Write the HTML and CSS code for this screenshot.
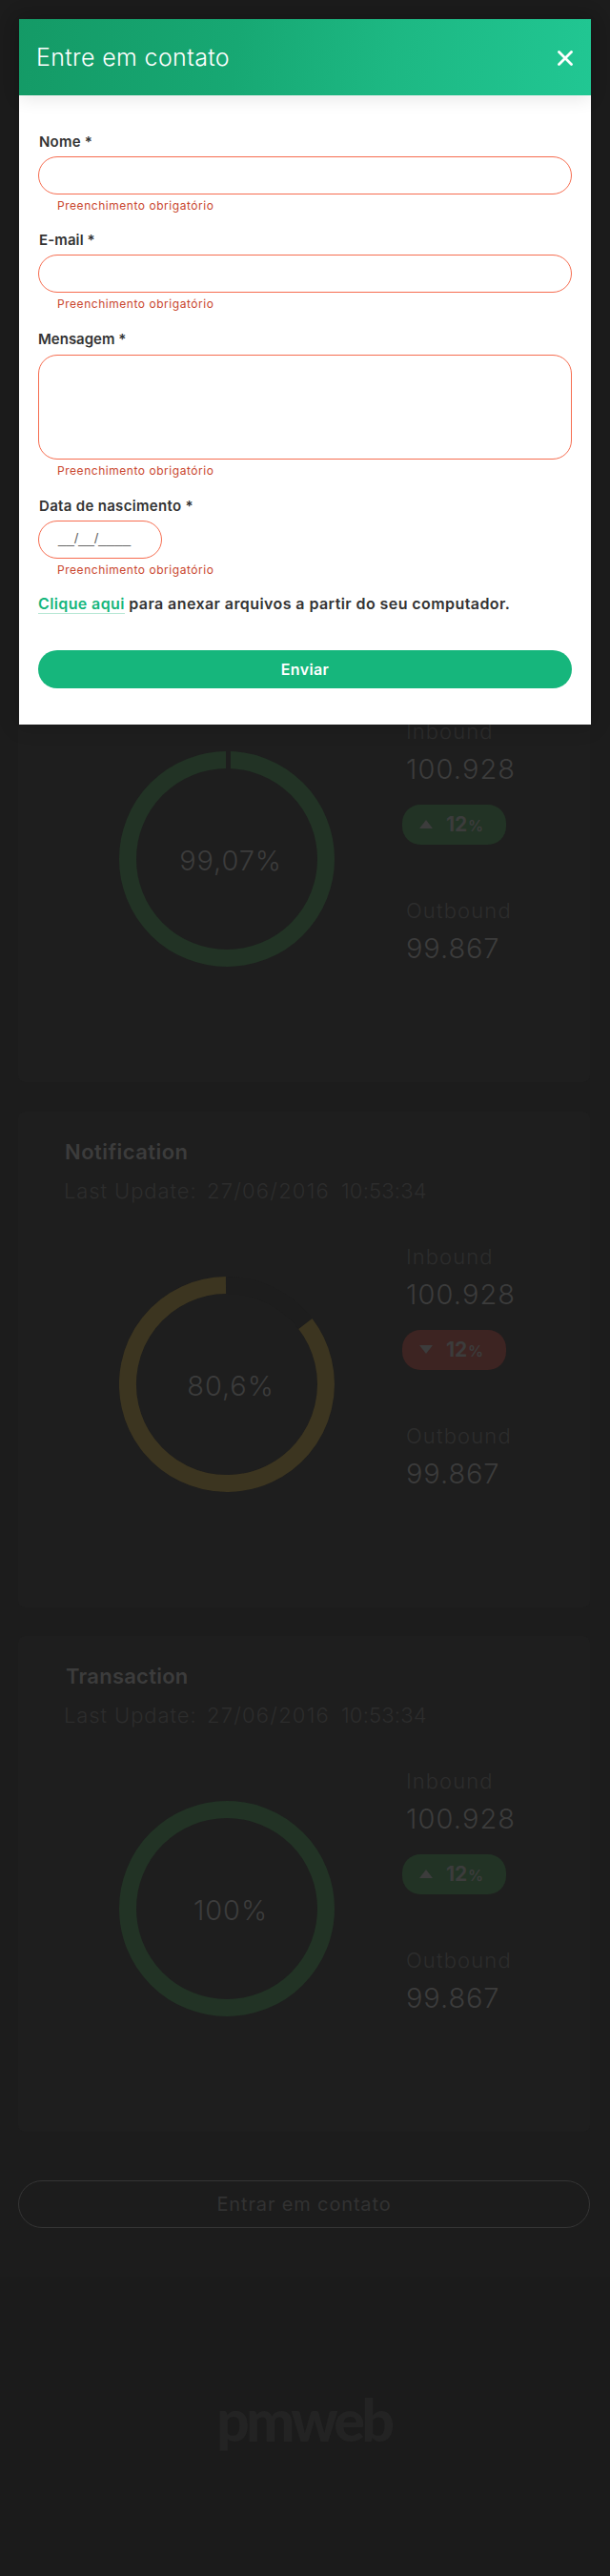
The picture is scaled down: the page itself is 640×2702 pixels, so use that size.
FILE: index.html
```
<!DOCTYPE html>
<html lang="pt-BR">
<head>
<meta charset="utf-8">
<title>Entre em contato</title>
<link rel="stylesheet" href="styles.css">
</head>
<body>
<main class="page">
  <section class="card card-first">
    <div class="card-body">
      <div class="ring">
        <svg class="ring-svg" viewBox="0 0 226 226"><circle class="arc green" cx="113" cy="113" r="104"/><rect class="gap" x="112" y="0" width="5" height="19"/></svg>
        <span class="ring-value">99,07%</span>
      </div>
      <div class="stats">
        <span class="stat-name inbound">Inbound</span>
        <span class="stat-value">100.928</span>
        <span class="badge up"><svg class="arrow" viewBox="0 0 14 9"><path d="M7 0L14 9H0Z"/></svg><b class="num">12</b><b class="pct">%</b></span>
        <span class="stat-name outbound">Outbound</span>
        <span class="stat-value short">99.867</span>
      </div>
    </div>
  </section>

  <section class="card">
    <header class="card-head">
      <h2 class="card-title">Notification</h2>
      <p class="update"><span class="update-label">Last Update:</span><span class="update-date">27/06/2016</span><span class="update-time">10:53:34</span></p>
    </header>
    <div class="card-body">
      <div class="ring">
        <svg class="ring-svg" viewBox="0 0 226 226"><circle class="arc rest" cx="113" cy="113" r="104"/><path class="arc yellow" d="M195.4 49.6A104 104 0 1 1 112 9"/></svg>
        <span class="ring-value">80,6%</span>
      </div>
      <div class="stats">
        <span class="stat-name inbound">Inbound</span>
        <span class="stat-value">100.928</span>
        <span class="badge down"><svg class="arrow" viewBox="0 0 14 9"><path d="M0 0H14L7 9Z"/></svg><b class="num">12</b><b class="pct">%</b></span>
        <span class="stat-name outbound">Outbound</span>
        <span class="stat-value short">99.867</span>
      </div>
    </div>
  </section>

  <section class="card">
    <header class="card-head">
      <h2 class="card-title transaction">Transaction</h2>
      <p class="update"><span class="update-label">Last Update:</span><span class="update-date">27/06/2016</span><span class="update-time">10:53:34</span></p>
    </header>
    <div class="card-body">
      <div class="ring">
        <svg class="ring-svg" viewBox="0 0 226 226"><circle class="arc green" cx="113" cy="113" r="104"/></svg>
        <span class="ring-value">100%</span>
      </div>
      <div class="stats">
        <span class="stat-name inbound">Inbound</span>
        <span class="stat-value">100.928</span>
        <span class="badge up"><svg class="arrow" viewBox="0 0 14 9"><path d="M7 0L14 9H0Z"/></svg><b class="num">12</b><b class="pct">%</b></span>
        <span class="stat-name outbound">Outbound</span>
        <span class="stat-value short">99.867</span>
      </div>
    </div>
  </section>

  <button class="contact" type="button">Entrar em contato</button>

  <footer class="footer">
    <svg class="logo" viewBox="0 -20 240 120" role="img" aria-label="pmweb"><text class="logo-text" x="25" y="58" textLength="187" lengthAdjust="spacing">pmweb</text></svg>
  </footer>
</main>

<div class="modal" role="dialog">
  <header class="modal-head">
    <h1 class="modal-title">Entre em contato</h1>
    <svg class="close" viewBox="0 0 16 16"><path d="M1.5 1.5L14.5 14.5M14.5 1.5L1.5 14.5"/></svg>
  </header>
  <form class="form">
    <label class="label">Nome *</label>
    <div class="field"></div>
    <p class="error">Preenchimento obrigatório</p>
    <label class="label email">E-mail *</label>
    <div class="field"></div>
    <p class="error">Preenchimento obrigatório</p>
    <label class="label message">Mensagem *</label>
    <div class="field area"></div>
    <p class="error">Preenchimento obrigatório</p>
    <label class="label birth">Data de nascimento *</label>
    <div class="field date">__/__/____</div>
    <p class="error">Preenchimento obrigatório</p>
    <p class="attach"><a class="link">Clique aqui</a> para anexar arquivos a partir do seu computador.</p>
    <button class="send" type="button">Enviar</button>
  </form>
</div>
</body>
</html>
```
FILE: styles.css
```
* { box-sizing: border-box; margin: 0; padding: 0; }

body {
  position: relative;
  background: #1c1c1c;
  font-family: Inter, "Liberation Sans", sans-serif;
  color: #3c3c3c;
}

button { font-family: inherit; background: none; border: 0; }

/* Dashboard behind the dialog */
.page {
  display: flex;
  flex-direction: column;
  height: 2702px;
  padding: 615px 21px 0 19px;
}

.card {
  flex: none;
  height: 520px;
  margin-bottom: 30px;
  border-radius: 7px;
  background: #1e1e1e;
}
.card-first { margin-bottom: 31px; padding-top: 98px; }

.card-head { height: 98px; padding: 27px 0 0 49px; }
.card-title { font-size: 22px; line-height: 30px; font-weight: 600; letter-spacing: .45px; }
.card-title.transaction { letter-spacing: .25px; padding-left: 1px; }
.update {
  display: flex;
  margin-top: 11px;
  font-size: 22px;
  line-height: 30px;
  font-weight: 300;
  color: #2d2d2d;
}
.update-label { width: 150px; letter-spacing: .9px; margin-left: -1px; }
.update-date { width: 141px; letter-spacing: 1.2px; }
.update-time { letter-spacing: .2px; }

.card-body { display: flex; }
.ring {
  display: grid;
  width: 226px;
  height: 226px;
  margin: 75px 0 0 106px;
}
.ring-svg, .ring-value { grid-area: 1 / 1; }
.ring-svg { width: 226px; height: 226px; }
.arc { fill: none; stroke-width: 18; }
.green { stroke: #223325; }
.yellow { stroke: #3c3520; }
.rest { stroke: #1d1d1d; }
.gap { fill: #1e1e1e; }
.ring-value {
  place-self: center;
  padding: 3px 0 0 8px;
  font-size: 29px;
  line-height: 36px;
  font-weight: 300;
  letter-spacing: .88px;
}

.stats { display: flex; flex-direction: column; padding: 39px 0 0 75px; }
.stat-name { font-size: 22px; line-height: 30px; font-weight: 300; color: #2d2d2d; }
.inbound { letter-spacing: 1.05px; }
.outbound { margin-top: 54px; letter-spacing: 1.15px; }
.stat-value { margin-top: 7px; font-size: 29px; line-height: 36px; font-weight: 300; letter-spacing: 1.1px; }
.stat-value.short { letter-spacing: .9px; }

.badge {
  display: flex;
  align-items: center;
  width: 109px;
  height: 42px;
  margin: 19px 0 0 -4px;
  padding-left: 18px;
  border-radius: 19px;
}
.badge.up { background: #223325; }
.badge.down { background: #3d2422; }
.arrow { width: 14px; height: 9px; margin-bottom: 1px; fill: #3c3c3c; }
.num { width: 23px; margin-left: 14px; font-size: 21px; line-height: 42px; font-weight: 700; }
.pct { padding-top: 3px; font-size: 16px; line-height: 39px; font-weight: 600; }

.contact {
  flex: none;
  height: 50px;
  margin-top: 21px;
  border: 1px solid #353535;
  border-radius: 25px;
  font-size: 20px;
  letter-spacing: .85px;
  color: #323232;
}

.footer {
  display: flex;
  flex: 1;
  align-items: flex-start;
  justify-content: center;
  margin: 51px -21px 0 -19px;
  padding: 95px 0 0 4px;
  background: #1b1b1b;
}
.logo { width: 240px; height: 120px; }
.logo-text { font-size: 61px; font-weight: 900; font-family: Lato, sans-serif; fill: #232323; }

/* Contact dialog */
.modal {
  position: absolute;
  top: 20px;
  left: 20px;
  width: 600px;
  height: 740px;
  background: #fff;
  box-shadow: 0 0 20px rgba(0, 0, 0, .22);
}
.modal-head {
  display: flex;
  align-items: center;
  justify-content: space-between;
  height: 80px;
  padding: 0 19px 0 18px;
  background: linear-gradient(100deg, #149a66, #17a873 38%, #1db883 65%, #21c793);
  box-shadow: 0 3px 18px rgba(0, 0, 0, .1);
}
.modal-title { font-size: 25px; line-height: 32px; font-weight: 300; letter-spacing: .35px; color: #fff; }
.close { width: 16px; height: 16px; margin-top: 1px; fill: none; stroke: #fff; stroke-width: 2.8; stroke-linecap: round; }

.form { display: flex; flex-direction: column; padding: 39px 20px 0; }
.label {
  padding-left: 1px;
  margin-bottom: 5px;
  font-size: 15px;
  line-height: 20px;
  font-weight: 600;
  letter-spacing: .2px;
  color: #333;
}
.email { margin-top: 18px; letter-spacing: .11px; }
.message { margin: 19px 0 6px; padding-left: 0; letter-spacing: 0; }
.birth { margin-top: 19px; letter-spacing: .31px; }
.field { height: 40px; border: 1px solid #f66d50; border-radius: 20px; }
.area { height: 110px; }
.date {
  width: 130px;
  padding-left: 20px;
  font-family: "Liberation Sans", sans-serif;
  font-size: 15px;
  line-height: 36px;
  letter-spacing: .1px;
  color: #666;
}
.error { margin-top: 4px; padding-left: 20px; font-size: 12px; line-height: 16px; letter-spacing: .54px; color: #c9452d; }
.attach { margin-top: 16px; font-size: 16px; line-height: 22px; font-weight: 600; letter-spacing: .42px; color: #333; white-space: nowrap; }
.link { color: #16b67c; border-bottom: 1px solid #b8e8d6; letter-spacing: .38px; }
.send {
  height: 40px;
  margin-top: 38px;
  border-radius: 20px;
  background: #16b67c;
  color: #fff;
  font-size: 16px;
  font-weight: 600;
  letter-spacing: .4px;
}
```
